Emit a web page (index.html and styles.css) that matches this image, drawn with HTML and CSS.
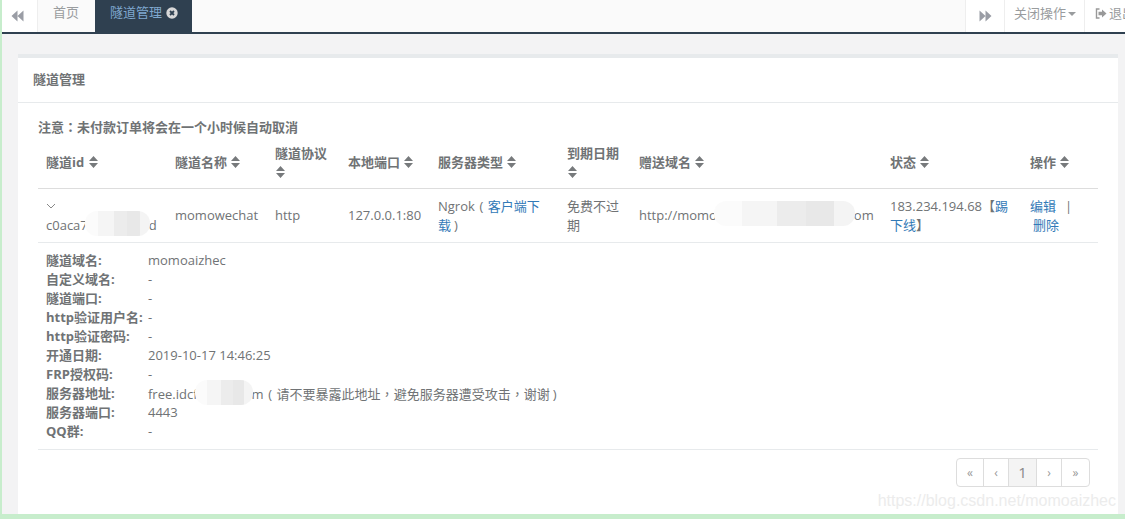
FILE: index.html
```html
<!DOCTYPE html>
<html lang="zh-CN">
<head>
<meta charset="utf-8">
<title>隧道管理</title>
<link rel="stylesheet" href="styles.css">
</head>
<body>
<div class="app">
  <header class="tabbar">
    <button class="tab-arrow tab-arrow-left" type="button">
      <svg class="arrow-icon" viewBox="0 0 13 12"><path d="M6.5 0.5v11L0.5 6zM12.5 0.5v11L6.5 6z"/></svg>
    </button>
    <a class="tab">首页</a>
    <a class="tab tab-active">隧道管理
      <svg class="tab-close" viewBox="0 0 12 12"><circle cx="6" cy="6" r="5.7"/><path d="M4 4l4 4M8 4l-4 4"/></svg>
    </a>
    <span class="tab-spacer"></span>
    <button class="tab-arrow tab-arrow-right" type="button">
      <svg class="arrow-icon" viewBox="0 0 13 12"><path d="M0.5 0.5v11L6.5 6zM6.5 0.5v11L12.5 6z"/></svg>
    </button>
    <a class="tab-action">关闭操作<span class="caret"></span></a>
    <a class="tab-logout">
      <svg class="logout-icon" viewBox="0 0 12 11"><path class="logout-frame" d="M4.5 1H1.5V10H4.5"/><path class="logout-arrow" d="M3.5 3.8H7V1.5L11.5 5.5 7 9.5V7.2H3.5z"/></svg>退出
    </a>
  </header>
  <main class="content">
    <section class="card">
      <h5 class="card-title">隧道管理</h5>
      <div class="card-body">
        <p class="notice">注意<span class="p" lang="zh-TW">：</span>未付款订单将会在一个小时候自动取消</p>
        <table class="grid">
          <colgroup>
            <col class="c1"><col class="c2"><col class="c3"><col class="c4"><col class="c5"><col class="c6"><col class="c7"><col class="c8"><col class="c9">
          </colgroup>
          <thead>
            <tr>
              <th>隧道id <svg class="sort" viewBox="0 0 9 12"><path d="M4.5 0L9 5H0zM0 7h9L4.5 12z"/></svg></th>
              <th>隧道名称 <svg class="sort" viewBox="0 0 9 12"><path d="M4.5 0L9 5H0zM0 7h9L4.5 12z"/></svg></th>
              <th>隧道协议 <svg class="sort" viewBox="0 0 9 12"><path d="M4.5 0L9 5H0zM0 7h9L4.5 12z"/></svg></th>
              <th>本地端口 <svg class="sort" viewBox="0 0 9 12"><path d="M4.5 0L9 5H0zM0 7h9L4.5 12z"/></svg></th>
              <th>服务器类型 <svg class="sort" viewBox="0 0 9 12"><path d="M4.5 0L9 5H0zM0 7h9L4.5 12z"/></svg></th>
              <th>到期日期 <svg class="sort" viewBox="0 0 9 12"><path d="M4.5 0L9 5H0zM0 7h9L4.5 12z"/></svg></th>
              <th>赠送域名 <svg class="sort" viewBox="0 0 9 12"><path d="M4.5 0L9 5H0zM0 7h9L4.5 12z"/></svg></th>
              <th>状态 <svg class="sort" viewBox="0 0 9 12"><path d="M4.5 0L9 5H0zM0 7h9L4.5 12z"/></svg></th>
              <th>操作 <svg class="sort" viewBox="0 0 9 12"><path d="M4.5 0L9 5H0zM0 7h9L4.5 12z"/></svg></th>
            </tr>
          </thead>
          <tbody>
            <tr>
              <td><svg class="chevron" viewBox="0 0 10 6"><path d="M1 1l4 4 4-4"/></svg><br>c0aca7<span class="redact redact-id"></span>d</td>
              <td>momowechat</td>
              <td>http</td>
              <td>127.0.0.1:80</td>
              <td>Ngrok<span class="paren-open">(</span><a href="#">客户端下载</a><span class="paren-close">)</span></td>
              <td>免费不过期</td>
              <td class="nowrap">http://momo<span class="redact redact-domain"></span>om</td>
              <td>183.234.194.68【<a href="#">踢下线</a>】</td>
              <td><a href="#">编辑</a><span class="sep">|</span> <a class="del" href="#">删除</a></td>
            </tr>
            <tr>
              <td class="detail-cell" colspan="9">
                <dl class="detail">
                  <dt>隧道域名:</dt><dd>momoaizhec</dd>
                  <dt>自定义域名:</dt><dd>-</dd>
                  <dt>隧道端口:</dt><dd>-</dd>
                  <dt>http验证用户名:</dt><dd>-</dd>
                  <dt>http验证密码:</dt><dd>-</dd>
                  <dt>开通日期:</dt><dd>2019-10-17 14:46:25</dd>
                  <dt>FRP授权码:</dt><dd>-</dd>
                  <dt>服务器地址:</dt><dd>free.idcf<span class="redact redact-server"></span>m<span class="paren-open">(</span>请不要暴露此地址<span class="p" lang="zh-TW">，</span>避免服务器遭受攻击<span class="p" lang="zh-TW">，</span>谢谢<span class="paren-close">)</span></dd>
                  <dt>服务器端口:</dt><dd>4443</dd>
                  <dt>QQ群:</dt><dd>-</dd>
                </dl>
              </td>
            </tr>
          </tbody>
        </table>
        <nav class="pager">
          <a>«</a><a>‹</a><a class="page-current">1</a><a>›</a><a>»</a>
        </nav>
      </div>
      <span class="watermark">https://blog.csdn.net/momoaizhec</span>
    </section>
  </main>
</div>
</body>
</html>
```
FILE: styles.css
```css
* { box-sizing: border-box; }
html, body { margin: 0; height: 100%; overflow: hidden; }
body {
  background: #c7edcc;
  font-family: "Open Sans", "Noto Sans CJK SC", sans-serif;
  font-size: 13px;
  line-height: 18.57px;
  color: #707375;
}
.app {
  margin-left: 2px;
  height: 514px;
  display: flex;
  flex-direction: column;
  background: #f3f3f4;
  overflow: hidden;
}
.tabbar {
  flex: 0 0 34px;
  display: flex;
  align-items: stretch;
  background: #fafafa;
  border-bottom: 2px solid #2f4050;
  white-space: nowrap;
}
.tab-arrow {
  border: 0;
  padding: 0;
  background: #fff;
  display: flex;
  align-items: center;
  justify-content: center;
}
.tab-arrow-left { width: 36px; padding-right: 4px; border-right: 1px solid #eee; }
.tab-arrow-right { width: 40px; border-left: 1px solid #eee; border-right: 1px solid #eee; }
.arrow-icon { width: 13px; height: 12px; fill: #9a9da5; }
.tab {
  width: 57px;
  padding-left: 15px;
  line-height: 25px;
  color: #999c9e;
}
.tab-active {
  width: 97px;
  background: #2f4050;
  color: #7fa8cf;
  display: flex;
  align-items: flex-start;
  gap: 4px;
}
.tab-close { width: 12px; height: 12px; margin-top: 7px; }
.tab-close circle { fill: #d8d8d8; }
.tab-close path { stroke: #2f4050; stroke-width: 1.8; fill: none; }
.tab-spacer { flex: 1; }
.tab-action {
  width: 80px;
  padding-left: 9px;
  line-height: 27px;
  background: #fff;
  color: #999c9e;
  border-right: 1px solid #eee;
}
.caret {
  display: inline-block;
  margin-left: 2px;
  vertical-align: 2px;
  border-top: 4px solid #999c9e;
  border-left: 4px solid transparent;
  border-right: 4px solid transparent;
}
.tab-logout {
  flex: 0 0 40px;
  padding-left: 10px;
  line-height: 27px;
  background: #fff;
  color: #999c9e;
  overflow: hidden;
  display: flex;
  align-items: flex-start;
  gap: 2px;
}
.logout-icon { flex: 0 0 12px; height: 11px; margin-top: 8px; }
.logout-frame { fill: none; stroke: #999; stroke-width: 1.4; }
.logout-arrow { fill: #999; }
.content {
  flex: 1;
  min-height: 0;
  padding: 20px 7px 0 16px;
  display: flex;
}
.card {
  flex: 1;
  position: relative;
  background: #fff;
  border-top: 4px solid #e7eaec;
}
.card-title {
  margin: 0;
  height: 45px;
  padding: 12px 15px 0;
  font-size: 13px;
  font-weight: 600;
  line-height: 18px;
  border-bottom: 1px solid #e7eaec;
}
.card-body { padding: 15px 20px 0; }
.notice {
  margin: 0 0 5px;
  font-weight: 700;
  line-height: 18px;
}
.p { font-family: "Noto Sans CJK TC", sans-serif; }
.paren-open { display: inline-block; width: 13px; text-align: center; }
.paren-close { display: inline-block; width: 10px; text-align: center; }
.grid {
  width: 1060px;
  table-layout: fixed;
  border-collapse: collapse;
}
.c1 { width: 129px; }
.c2 { width: 100px; }
.c3 { width: 73px; }
.c4 { width: 90px; }
.c5 { width: 129px; }
.c6 { width: 72px; }
.c7 { width: 251px; }
.c8 { width: 140px; }
.c9 { width: 76px; }
th {
  padding: 3px 8px 7px;
  text-align: left;
  vertical-align: middle;
  font-weight: 700;
  border-bottom: 1px solid #ddd;
}
td {
  padding: 8px;
  vertical-align: middle;
  border-bottom: 1px solid #e7eaec;
}
.sort { width: 9px; height: 12px; fill: #777a7c; vertical-align: -1px; margin-left: 1px; }
.chevron { width: 10px; height: 6px; fill: none; stroke: #888; stroke-width: 1; vertical-align: 2px; }
.nowrap { white-space: nowrap; }
a { color: #337ab7; text-decoration: none; }
.sep { margin: 0 6px 0 9px; }
.del { margin-left: 3px; }
.redact {
  display: inline-block;
  position: relative;
  height: 1em;
  vertical-align: baseline;
}
.redact::after {
  content: "";
  position: absolute;
  top: -6px;
  bottom: -6px;
  left: -3px;
  right: -1px;
  border-radius: 12px;
  background: linear-gradient(90deg, #fbfbfb 0 20%, #f5f5f5 20% 45%, #ececec 45% 65%, #e8e8e8 65% 85%, #f4f4f4 85%);
}
.redact-id { width: 61px; }
.redact-domain { width: 137px; }
.redact-server { width: 54px; }
.detail-cell { padding: 8px; }
.detail {
  margin: 0;
  display: grid;
  grid-template-columns: 102px 1fr;
  grid-auto-rows: 19px;
  line-height: 19px;
}
.detail dt { font-weight: 700; white-space: nowrap; }
.detail dd { margin: 0; white-space: nowrap; }
.pager {
  display: flex;
  justify-content: flex-end;
  margin: 8px 8px 0 0;
}
.pager a {
  height: 29px;
  width: 26px;
  border: 1px solid #ddd;
  margin-left: -1px;
  color: #999;
  font-size: 12px;
  line-height: 27px;
  text-align: center;
}
.pager a:first-child { border-radius: 4px 0 0 4px; width: 28px; }
.pager a:last-child { border-radius: 0 4px 4px 0; width: 29px; }
.pager .page-current { background: #f4f4f4; font-size: 15px; width: 29px; color: #888; }
.watermark {
  position: absolute;
  right: 2px;
  bottom: 3px;
  font-family: "Liberation Sans", sans-serif;
  font-size: 16px;
  line-height: 20px;
  color: #ececec;
}
```
